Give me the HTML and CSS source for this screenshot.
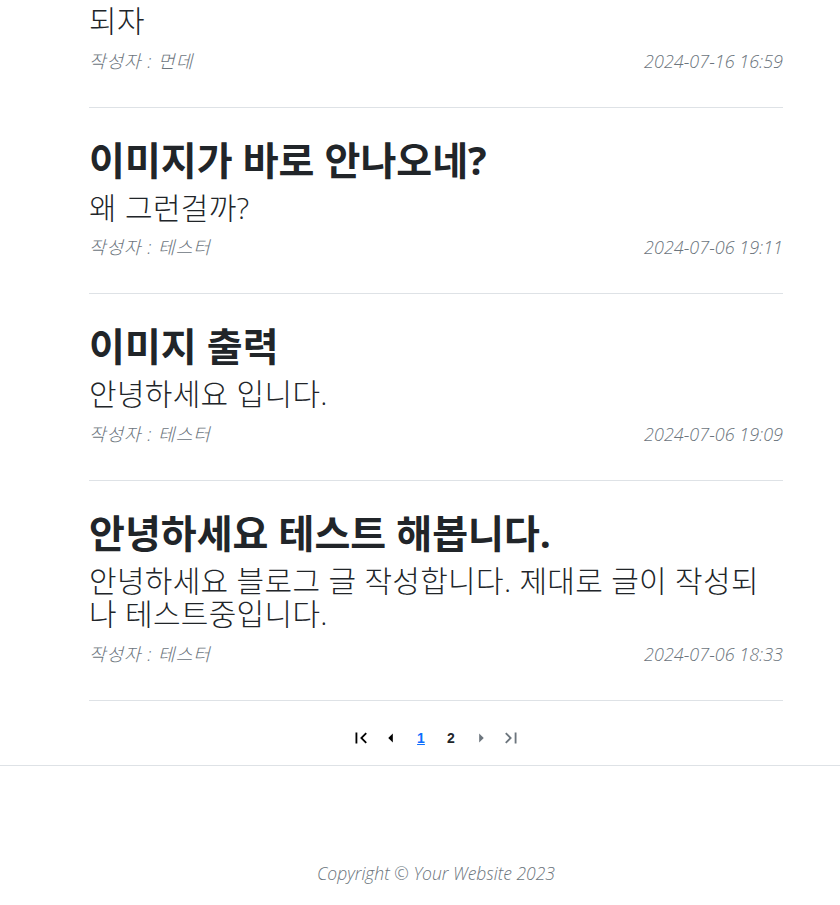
FILE: index.html
```html
<!DOCTYPE html>
<html lang="ko">
<head>
<meta charset="utf-8">
<title>Blog</title>
<link rel="stylesheet" href="styles.css">
</head>
<body>
<main class="container">
  <div class="post post-partial">
    <h3 class="post-subtitle">되자</h3>
    <div class="post-meta"><span class="author">작성자 : 먼데</span><span>2024-07-16 16:59</span></div>
  </div>
  <hr class="divider">
  <div class="post">
    <a class="post-link" href="#"><h2 class="post-title">이미지가 바로 안나오네?</h2><h3 class="post-subtitle">왜 그런걸까?</h3></a>
    <div class="post-meta"><span class="author">작성자 : 테스터</span><span>2024-07-06 19:11</span></div>
  </div>
  <hr class="divider">
  <div class="post">
    <a class="post-link" href="#"><h2 class="post-title">이미지 출력</h2><h3 class="post-subtitle">안녕하세요 입니다.</h3></a>
    <div class="post-meta"><span class="author">작성자 : 테스터</span><span>2024-07-06 19:09</span></div>
  </div>
  <hr class="divider">
  <div class="post">
    <a class="post-link" href="#"><h2 class="post-title">안녕하세요 테스트 해봅니다.</h2><h3 class="post-subtitle">안녕하세요 블로그 글 작성합니다. 제대로 글이 작성되나 테스트중입니다.</h3></a>
    <div class="post-meta"><span class="author">작성자 : 테스터</span><span>2024-07-06 18:33</span></div>
  </div>
  <hr class="divider">
  <nav class="pagination">
    <a class="page-item page-dark" href="#"><svg viewBox="0 0 24 24"><path d="M18.41 16.59L13.82 12l4.59-4.59L17 6l-6 6 6 6zM6 6h2v12H6z"/></svg></a>
    <a class="page-item page-dark" href="#"><svg viewBox="0 0 24 24"><path d="M14 7l-5 5 5 5V7z"/></svg></a>
    <a class="page-item page-num page-active" href="#">1</a>
    <a class="page-item page-num" href="#">2</a>
    <a class="page-item page-gray" href="#"><svg viewBox="0 0 24 24"><path d="M10 17l5-5-5-5v10z"/></svg></a>
    <a class="page-item page-gray" href="#"><svg viewBox="0 0 24 24"><path d="M5.59 7.41L10.18 12l-4.59 4.59L7 18l6-6-6-6zM16 6h2v12h-2z"/></svg></a>
  </nav>
</main>
<footer class="footer">
  <div class="container">
    <div class="copyright">Copyright © Your Website 2023</div>
  </div>
</footer>
</body>
</html>
```

FILE: styles.css
```css
html, body {
  margin: 0;
  padding: 0;
  background: #fff;
}
body {
  font-family: "Open Sans", "Noto Sans CJK KR", sans-serif;
  color: #212529;
}
.container {
  width: 694px;
  margin-left: 89px;
}
.post-partial {
  padding-top: 4px;
}
.post-link {
  display: block;
  color: #212529;
  text-decoration: none;
}
.post-title {
  font-family: "Open Sans", "Noto Sans CJK KR", sans-serif;
  font-size: 39px;
  font-weight: 700;
  line-height: 43px;
  margin: 30px 0 10px;
}
.post-subtitle {
  font-family: "Open Sans", "Noto Sans CJK KR", sans-serif;
  font-size: 30px;
  font-weight: 300;
  line-height: 33.6px;
  letter-spacing: 0.3px;
  margin: 0 0 10px;
  word-break: break-all;
}
.post-meta {
  display: flex;
  justify-content: space-between;
  font-size: 18px;
  line-height: 27px;
  font-style: italic;
  font-weight: 300;
  color: #6c757d;
  margin-bottom: 32px;
}
.author {
  letter-spacing: 1px;
}
.divider {
  border: 0;
  border-top: 1px solid #dee2e6;
  margin: 0;
  height: 0;
}
.pagination {
  display: flex;
  justify-content: center;
  align-items: center;
  height: 22px;
  margin: 26px 0 16px;
}
.page-item {
  width: 30px;
  height: 22px;
  display: flex;
  align-items: center;
  justify-content: center;
  text-decoration: none;
  font-family: "Liberation Sans", sans-serif;
  font-size: 14px;
  font-weight: 700;
}
.page-item svg {
  width: 22px;
  height: 22px;
  fill: currentColor;
}
.page-dark { color: #000; }
.page-gray { color: #6c757d; }
.page-num { color: #212529; }
.page-active {
  color: #0d6efd;
  text-decoration: underline;
}
.footer {
  border-top: 1px solid #dee2e6;
  padding-top: 95px;
  padding-bottom: 40px;
}
.copyright {
  text-align: center;
  font-size: 17.5px;
  line-height: 24px;
  font-style: italic;
  font-weight: 300;
  color: #6c757d;
}
```
